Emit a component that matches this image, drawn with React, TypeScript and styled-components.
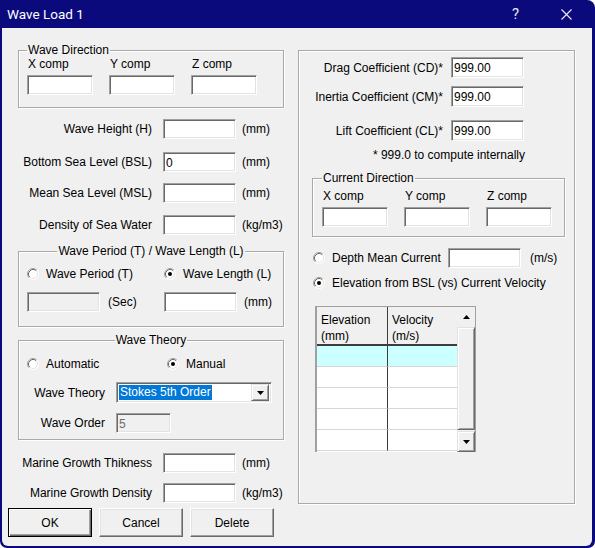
import { Fragment } from "react";
import styled, { createGlobalStyle } from "styled-components";

const FONT = `"Liberation Sans", Arial, sans-serif`;

const GlobalStyle = createGlobalStyle`
  html, body {
    margin: 0;
    padding: 0;
    background: #fff;
  }
  * {
    box-sizing: border-box;
  }
`;

const Window = styled.div`
  width: 595px;
  height: 548px;
  display: flex;
  flex-direction: column;
  background: #0a0a7d;
  border-radius: 0 8px 7px 7px;
  overflow: hidden;
  font-family: ${FONT};
  font-size: 12px;
  color: #000;
`;

const TitleBar = styled.div`
  flex: none;
  height: 28px;
  display: flex;
  align-items: center;
  padding-left: 7px;
  color: #fff;
  font-family: Roboto, "Liberation Sans", sans-serif;
  font-size: 13.5px;
`;

const TitleText = styled.span`
  flex: 1;
`;

const CaptionButton = styled.div`
  width: 51px;
  height: 28px;
  display: flex;
  align-items: center;
  justify-content: center;
  font-size: 15px;
  color: #e8e8f4;
  &:last-child {
    margin-right: 3px;
  }
`;

const Body = styled.div`
  flex: 1;
  margin: 0 3px 2px 2px;
  padding: 15px 0 0 6px;
  background: #f0f0f0;
  border-radius: 0 0 6px 6px;
`;

const Columns = styled.div`
  display: grid;
  grid-template-columns: 266px 277px;
  column-gap: 14px;
  align-items: start;
  padding-left: 10px;
`;

const Column = styled.div`
  display: flex;
  flex-direction: column;
`;

const GroupBox = styled.fieldset<{ $pad: string; $mt?: number; $mx?: string; $h?: number }>`
  margin: ${(p) => p.$mt ?? 0}px ${(p) => p.$mx ?? "0 0 0"};
  min-width: 0;
  padding: ${(p) => p.$pad};
  height: ${(p) => (p.$h ? `${p.$h}px` : "auto")};
  border: 1px solid #a9a9a9;
  box-shadow: 1px 1px 0 #fff, inset 1px 1px 0 #fff;
`;

const Legend = styled.legend<{ $center?: boolean }>`
  padding: 0 1px;
  line-height: 14px;
  margin: ${(p) => (p.$center ? "0 auto" : "0")};
`;

const TextBox = styled.input<{ $w?: number; $h?: number }>`
  width: ${(p) => p.$w ?? 73}px;
  height: ${(p) => p.$h ?? 20}px;
  margin: 0;
  padding: 1px 2px 0;
  font: 12px ${FONT};
  color: #000;
  background: #fff;
  border: 1px solid;
  border-color: #a0a0a0 #fff #fff #a0a0a0;
  box-shadow: inset 1px 1px 0 #696969, inset -1px -1px 0 #e3e3e3;
  outline: none;
  &:disabled {
    background: #f0f0f0;
    color: #6d6d6d;
    -webkit-text-fill-color: #6d6d6d;
  }
`;

const CompGrid = styled.div`
  display: grid;
  grid-template-columns: repeat(3, 66px);
  column-gap: 16px;
  row-gap: 4px;
  line-height: 14px;
  span {
    padding-left: 1px;
  }
`;

const FieldRow = styled.div<{ $label: number; $gap: number; $mt?: number }>`
  display: grid;
  grid-template-columns: ${(p) => p.$label}px auto auto;
  justify-content: start;
  align-items: center;
  margin-top: ${(p) => p.$mt ?? 0}px;
  & > label {
    text-align: right;
    white-space: nowrap;
    padding-right: ${(p) => p.$gap}px;
  }
`;

const Unit = styled.span<{ $gap?: number }>`
  margin-left: ${(p) => p.$gap ?? 6}px;
  white-space: nowrap;
`;

const RadioPair = styled.div<{ $col: number; $mt?: number }>`
  display: grid;
  grid-template-columns: ${(p) => p.$col}px auto;
  margin-top: ${(p) => p.$mt ?? 0}px;
`;

const RadioOption = styled.label<{ $w?: number }>`
  display: inline-flex;
  align-items: center;
  gap: 7px;
  height: 14px;
  white-space: nowrap;
  width: ${(p) => (p.$w ? `${p.$w}px` : "auto")};
`;

const UnitPair = styled.div<{ $mt: number }>`
  display: grid;
  grid-template-columns: 137px auto;
  align-items: center;
  margin-top: ${(p) => p.$mt}px;
  & > div {
    display: flex;
    align-items: center;
  }
`;

const Combo = styled.div`
  width: 156px;
  height: 21px;
  display: flex;
  align-items: center;
  padding: 2px;
  background: #fff;
  border: 1px solid;
  border-color: #a0a0a0 #fff #fff #a0a0a0;
  box-shadow: inset 1px 1px 0 #696969, inset -1px -1px 0 #e3e3e3;
`;

const ComboText = styled.span`
  background: #0078d7;
  color: #fff;
  line-height: 15px;
  padding: 0 1px 0 1px;
`;

const RaisedBox = styled.div`
  display: flex;
  align-items: center;
  justify-content: center;
  background: #f0f0f0;
  border: 1px solid;
  border-color: #e3e3e3 #696969 #696969 #e3e3e3;
  box-shadow: inset 1px 1px 0 #fff, inset -1px -1px 0 #a0a0a0;
`;

const ComboButton = styled(RaisedBox)`
  margin-left: auto;
  width: 18px;
  height: 17px;
`;

const CoefRow = styled(FieldRow)`
  grid-template-columns: ${(p) => p.$label}px 73px;
`;

const Note = styled.div`
  width: 226px;
  margin-top: 7px;
  line-height: 14px;
  text-align: right;
`;

const DepthRow = styled.div`
  display: flex;
  align-items: center;
  margin-top: 11px;
  padding-left: 14px;
`;

const ElevationRow = styled.div`
  margin-top: 8px;
  padding-left: 14px;
`;

const DataGrid = styled.div`
  display: flex;
  width: 161px;
  height: 146px;
  margin: 14px 0 0 16px;
  background: #fff;
  border-top: 1px solid #a0a0a0;
  border-left: 2px solid #a0a0a0;
  border-right: 1px solid #a0a0a0;
`;

const GridCells = styled.div`
  display: grid;
  grid-template-columns: 71px 69px;
  grid-template-rows: 39px repeat(5, 21px);
`;

const HeaderCell = styled.div<{ $first?: boolean }>`
  background: #f0f0f0;
  padding: 5px 0 0 4px;
  line-height: 16px;
  border-bottom: 2px solid #3c3c3c;
  border-right: ${(p) => (p.$first ? "1px solid #3c3c3c" : "none")};
`;

const DataCell = styled.div<{ $first?: boolean; $active?: boolean }>`
  background: ${(p) => (p.$active ? "#ccffff" : "#fff")};
  border-bottom: 1px solid #d6d6d6;
  border-right: ${(p) => (p.$first ? "1px solid #3c3c3c" : "none")};
`;

const ScrollBar = styled.div`
  width: 18px;
  display: flex;
  flex-direction: column;
  background: #f0f0f0;
`;

const ScrollUp = styled.div`
  height: 20px;
  display: flex;
  align-items: center;
  justify-content: center;
`;

const ScrollThumb = styled(RaisedBox)`
  flex: 1;
`;

const ScrollDown = styled(RaisedBox)`
  height: 21px;
  margin-top: 1px;
`;

const ButtonRow = styled.div`
  display: flex;
  gap: 7px;
  margin-top: 4px;
`;

const DialogButton = styled.button<{ $default?: boolean }>`
  width: 84px;
  height: 29px;
  margin: 0;
  padding: 0;
  font: 12px ${FONT};
  color: #000;
  background: #f0f0f0;
  border: 1px solid;
  border-color: ${(p) => (p.$default ? "#000" : "#fff #696969 #696969 #fff")};
  box-shadow: ${(p) =>
    p.$default
      ? "inset 1px 1px 0 #fff, inset -1px -1px 0 #696969, inset -2px -2px 0 #a0a0a0"
      : "inset -1px -1px 0 #a0a0a0, inset 1px 1px 0 #e3e3e3"};
`;

function Radio({ checked }: { checked?: boolean }) {
  return (
    <svg width="12" height="12" viewBox="0 0 12 12">
      <circle cx="6" cy="6" r="5.5" fill="#fff" />
      <path d="M2.11 9.89 A5.5 5.5 0 0 1 9.89 2.11" fill="none" stroke="#a0a0a0" />
      <path d="M2.82 9.18 A4.5 4.5 0 0 1 9.18 2.82" fill="none" stroke="#696969" />
      <path d="M9.89 2.11 A5.5 5.5 0 0 1 2.11 9.89" fill="none" stroke="#fff" />
      <path d="M9.18 2.82 A4.5 4.5 0 0 1 2.82 9.18" fill="none" stroke="#e3e3e3" />
      {checked && <circle cx="6" cy="6" r="2" fill="#000" />}
    </svg>
  );
}

function Arrow({ up }: { up?: boolean }) {
  return (
    <svg width="7" height="4" viewBox="0 0 7 4">
      <polygon points={up ? "0,4 3.5,0 7,4" : "0,0 7,0 3.5,4"} fill="#000" />
    </svg>
  );
}

function CompInputs({ legend }: { legend: string }) {
  return (
    <>
      <Legend>{legend}</Legend>
      <CompGrid>
        <span>X comp</span>
        <span>Y comp</span>
        <span>Z comp</span>
        <TextBox $w={66} readOnly />
        <TextBox $w={66} readOnly />
        <TextBox $w={66} readOnly />
      </CompGrid>
    </>
  );
}

const leftFields = [
  { label: "Wave Height (H)", unit: "(mm)", mt: 11 },
  { label: "Bottom Sea Level (BSL)", unit: "(mm)", mt: 13, value: "0" },
  { label: "Mean Sea Level (MSL)", unit: "(mm)", mt: 11 },
  { label: "Density of Sea Water", unit: "(kg/m3)", mt: 12 },
];

const coefficients = [
  { label: "Drag Coefficient (CD)*", mt: 0 },
  { label: "Inertia Coefficient (CM)*", mt: 8 },
  { label: "Lift Coefficient (CL)*", mt: 13 },
];

export default function App() {
  return (
    <>
      <GlobalStyle />
      <Window>
        <TitleBar>
          <TitleText>Wave Load 1</TitleText>
          <CaptionButton>?</CaptionButton>
          <CaptionButton>
            <svg width="11" height="11" viewBox="0 0 11 11">
              <path d="M0.5 0.5 L10.5 10.5 M10.5 0.5 L0.5 10.5" stroke="#ececf6" strokeWidth="1.1" />
            </svg>
          </CaptionButton>
        </TitleBar>
        <Body>
          <Columns>
            <Column>
              <GroupBox $pad="0 8px 12px">
                <CompInputs legend="Wave Direction" />
              </GroupBox>

              {leftFields.map((f) => (
                <FieldRow key={f.label} $label={145} $gap={11} $mt={f.mt}>
                  <label>{f.label}</label>
                  <TextBox readOnly defaultValue={f.value} />
                  <Unit>{f.unit}</Unit>
                </FieldRow>
              ))}

              <GroupBox $pad="9px 8px 14px" $mt={9}>
                <Legend $center>Wave Period (T) / Wave Length (L)</Legend>
                <RadioPair $col={137}>
                  <RadioOption>
                    <Radio />
                    Wave Period (T)
                  </RadioOption>
                  <RadioOption>
                    <Radio checked />
                    Wave Length (L)
                  </RadioOption>
                </RadioPair>
                <UnitPair $mt={11}>
                  <div>
                    <TextBox disabled />
                    <Unit $gap={8}>(Sec)</Unit>
                  </div>
                  <div>
                    <TextBox readOnly />
                    <Unit $gap={7}>(mm)</Unit>
                  </div>
                </UnitPair>
              </GroupBox>

              <GroupBox $pad="10px 8px 6px" $mt={6}>
                <Legend $center>Wave Theory</Legend>
                <RadioPair $col={140}>
                  <RadioOption>
                    <Radio />
                    Automatic
                  </RadioOption>
                  <RadioOption>
                    <Radio checked />
                    Manual
                  </RadioOption>
                </RadioPair>
                <FieldRow $label={89} $gap={11} $mt={11}>
                  <label>Wave Theory</label>
                  <Combo>
                    <ComboText>Stokes 5th Order</ComboText>
                    <ComboButton>
                      <Arrow />
                    </ComboButton>
                  </Combo>
                </FieldRow>
                <FieldRow $label={89} $gap={11} $mt={10}>
                  <label>Wave Order</label>
                  <TextBox $w={55} disabled defaultValue="5" />
                </FieldRow>
              </GroupBox>

              <FieldRow $label={145} $gap={11} $mt={13}>
                <label>Marine Growth Thikness</label>
                <TextBox readOnly />
                <Unit>(mm)</Unit>
              </FieldRow>
              <FieldRow $label={145} $gap={11} $mt={10}>
                <label>Marine Growth Density</label>
                <TextBox readOnly />
                <Unit>(kg/m3)</Unit>
              </FieldRow>
            </Column>

            <GroupBox $pad="6px 0 0" $mt={7} $h={454}>
              {coefficients.map((c) => (
                <CoefRow key={c.label} $label={152} $gap={8} $mt={c.mt}>
                  <label>{c.label}</label>
                  <TextBox $h={21} readOnly defaultValue="999.00" />
                </CoefRow>
              ))}
              <Note>* 999.0 to compute internally</Note>

              <GroupBox $pad="4px 9px 9px" $mt={9} $mx="9px 0 13px">
                <CompInputs legend="Current Direction" />
              </GroupBox>

              <DepthRow>
                <RadioOption $w={135}>
                  <Radio />
                  Depth Mean Current
                </RadioOption>
                <TextBox readOnly />
                <Unit $gap={9}>(m/s)</Unit>
              </DepthRow>
              <ElevationRow>
                <RadioOption>
                  <Radio checked />
                  Elevation from BSL (vs) Current Velocity
                </RadioOption>
              </ElevationRow>

              <DataGrid>
                <GridCells>
                  <HeaderCell $first>
                    Elevation
                    <br />
                    (mm)
                  </HeaderCell>
                  <HeaderCell>
                    Velocity
                    <br />
                    (m/s)
                  </HeaderCell>
                  {[0, 1, 2, 3, 4].map((r) => (
                    <Fragment key={r}>
                      <DataCell $first $active={r === 0} />
                      <DataCell $active={r === 0} />
                    </Fragment>
                  ))}
                </GridCells>
                <ScrollBar>
                  <ScrollUp>
                    <Arrow up />
                  </ScrollUp>
                  <ScrollThumb />
                  <ScrollDown>
                    <Arrow />
                  </ScrollDown>
                </ScrollBar>
              </DataGrid>
            </GroupBox>
          </Columns>

          <ButtonRow>
            <DialogButton $default>OK</DialogButton>
            <DialogButton>Cancel</DialogButton>
            <DialogButton>Delete</DialogButton>
          </ButtonRow>
        </Body>
      </Window>
    </>
  );
}
